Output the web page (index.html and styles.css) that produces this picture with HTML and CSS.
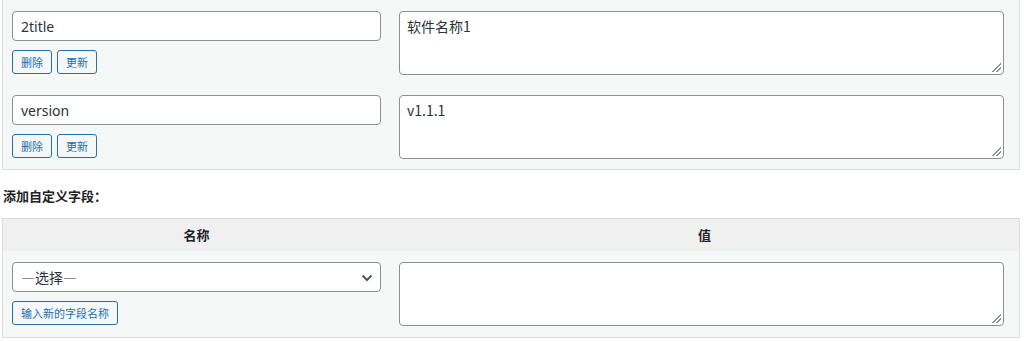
FILE: index.html
```html
<!DOCTYPE html>
<html lang="zh-CN">
<head>
<meta charset="utf-8">
<title>自定义字段</title>
<link rel="stylesheet" href="styles.css">
</head>
<body>
<div class="panel existing">
  <div class="row">
    <div class="keycol">
      <input class="field" type="text" value="2title">
      <div class="btns"><button class="btn">删除</button><button class="btn">更新</button></div>
    </div>
    <textarea class="area">软件名称1</textarea>
  </div>
  <div class="row">
    <div class="keycol">
      <input class="field" type="text" value="version">
      <div class="btns"><button class="btn">删除</button><button class="btn">更新</button></div>
    </div>
    <textarea class="area">v1.1.1</textarea>
  </div>
</div>

<h3 class="heading">添加自定义字段：</h3>

<div class="panel newmeta">
  <div class="thead">
    <div class="th">名称</div>
    <div class="th">值</div>
  </div>
  <div class="row newrow">
    <div class="keycol">
      <div class="selwrap">
        <select class="field sel"><option>—选择—</option></select>
        <svg class="chev" width="12" height="8" viewBox="0 0 12 8"><path d="M1.5 1.5 L6 6 L10.5 1.5" fill="none" stroke="#50575e" stroke-width="2"/></svg>
      </div>
      <div class="btns"><button class="btn">输入新的字段名称</button></div>
    </div>
    <textarea class="area"></textarea>
  </div>
</div>
</body>
</html>
```

FILE: styles.css
```css
* { box-sizing: border-box; }
body {
  margin: 0;
  background: #fff;
  font-family: "Noto Sans", "Noto Sans CJK SC", sans-serif;
  color: #2c3338;
}
.panel {
  margin-left: 2px;
  width: 1018px;
  background: #f6f7f7;
  border: 1px solid #dcdcde;
}
.existing {
  border-top: none;
  padding-bottom: 1px;
}
.row {
  display: grid;
  grid-template-columns: 369px 605px;
  column-gap: 18px;
  padding: 11px 0 9px 9px;
}
.keycol {
  display: flex;
  flex-direction: column;
}
.field {
  width: 369px;
  height: 30px;
  border: 1px solid #8c8f94;
  border-radius: 4px;
  background: #fff;
  padding: 0 8px;
  font-family: "Noto Sans", "Noto Sans CJK SC", sans-serif;
  font-size: 14px;
  color: #2c3338;
  outline: none;
}
.btns {
  display: flex;
  gap: 5px;
  margin-top: 9px;
}
.btn {
  height: 24px;
  padding: 0 8px;
  border: 1px solid #2271b1;
  border-radius: 3px;
  background: #f6f7f7;
  color: #2271b1;
  font-family: "Noto Sans CJK SC", sans-serif;
  font-size: 11px;
  line-height: 22px;
}
.area {
  width: 605px;
  height: 64px;
  border: 1px solid #8c8f94;
  border-radius: 4px;
  padding: 5px 7px;
  font-family: "Noto Sans CJK SC", "Liberation Sans", sans-serif;
  font-size: 14px;
  line-height: 1.3;
  color: #2c3338;
  resize: none;
  outline: none;
  background-color: #fff;
  background-image:
    linear-gradient(to bottom right, #fff 50%, transparent 50%),
    repeating-linear-gradient(135deg, #8c8f94 0 1px, transparent 1px 3px);
  background-size: 11px 11px, 11px 11px;
  background-position: right 2px bottom 2px, right 2px bottom 2px;
  background-repeat: no-repeat;
}
.heading {
  margin: 0;
  padding: 17px 0 14px 3px;
  font-family: "Noto Sans CJK SC", sans-serif;
  font-size: 13px;
  line-height: 17px;
  font-weight: 700;
  color: #1d2327;
}
.thead {
  display: grid;
  grid-template-columns: 387px 1fr;
  height: 32px;
  background: #f0f0f1;
  border-bottom: 1px solid #f0f0f1;
}
.th {
  text-align: center;
  font-family: "Noto Sans CJK SC", sans-serif;
  font-size: 13px;
  font-weight: 700;
  line-height: 32px;
  color: #1d2327;
}
.newrow {
  padding: 11px 0 11px 9px;
}
.selwrap {
  position: relative;
  width: 369px;
}
.sel {
  appearance: none;
  -webkit-appearance: none;
  font-family: "Noto Sans CJK SC", sans-serif;
}
.chev {
  position: absolute;
  right: 8px;
  top: 12px;
}
```
